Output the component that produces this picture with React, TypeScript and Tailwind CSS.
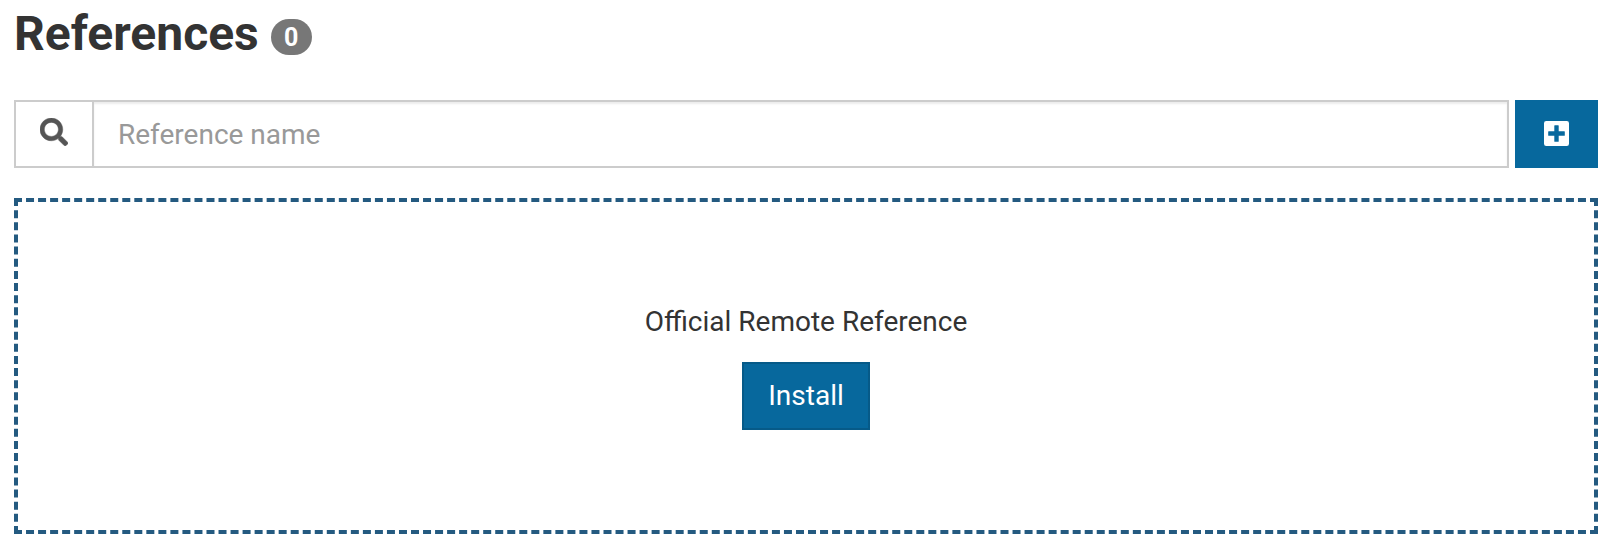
import { FaSearch } from "react-icons/fa";

function PlusSquare() {
  return (
    <svg className="size-[25px]" viewBox="0 0 25 25" fill="currentColor" aria-hidden="true">
      <path
        fillRule="evenodd"
        d="M2.2 0h20.6A2.2 2.2 0 0 1 25 2.2v20.6a2.2 2.2 0 0 1-2.2 2.2H2.2A2.2 2.2 0 0 1 0 22.8V2.2A2.2 2.2 0 0 1 2.2 0zM10.8 4.2a.5.5 0 0 0-.5.5v5.6H4.7a.5.5 0 0 0-.5.5v3.4a.5.5 0 0 0 .5.5h5.6v5.6a.5.5 0 0 0 .5.5h3.4a.5.5 0 0 0 .5-.5v-5.6h5.6a.5.5 0 0 0 .5-.5v-3.4a.5.5 0 0 0-.5-.5h-5.6V4.7a.5.5 0 0 0-.5-.5z"
      />
    </svg>
  );
}

export default function App() {
  return (
    <main className="h-[548px] bg-white pt-[6px] pr-3 pl-[14px] font-[Roboto,sans-serif] text-[28px] text-[#333]">
      <header className="flex h-14 items-center">
        <h1 className="text-[48px] leading-[56px] font-bold">References</h1>
        <span className="mt-[6px] ml-3 flex h-9 w-[41px] items-center justify-center rounded-[20px] bg-[#777] text-[25px] leading-none font-bold text-white">0</span>
      </header>
      <div className="mt-[38px] flex h-[68px] gap-[6px]">
        <div className="flex flex-1 border-2 border-[#ccc]">
          <span className="flex w-[78px] items-center justify-center border-r-2 border-[#ccc] pb-1 text-[#555]">
            <FaSearch className="size-7 stroke-current stroke-[8px]" />
          </span>
          <input className="min-w-0 flex-1 px-6 pt-[2px] shadow-[inset_0_2px_2px_rgba(0,0,0,0.075)] outline-none placeholder:text-[#999]" placeholder="Reference name" />
        </div>
        <button className="flex w-[83px] items-center justify-center bg-[#07689d] pb-px text-white" aria-label="Add reference">
          <PlusSquare />
        </button>
      </div>
      <section className="mt-[30px] flex h-[336px] flex-col items-center border-4 border-dashed border-[#245a80] pt-[100px]">
        <p className="leading-10">Official Remote Reference</p>
        <button className="mt-5 h-[68px] w-32 border-2 border-[#065a88] bg-[#07689d] text-white">Install</button>
      </section>
    </main>
  );
}
